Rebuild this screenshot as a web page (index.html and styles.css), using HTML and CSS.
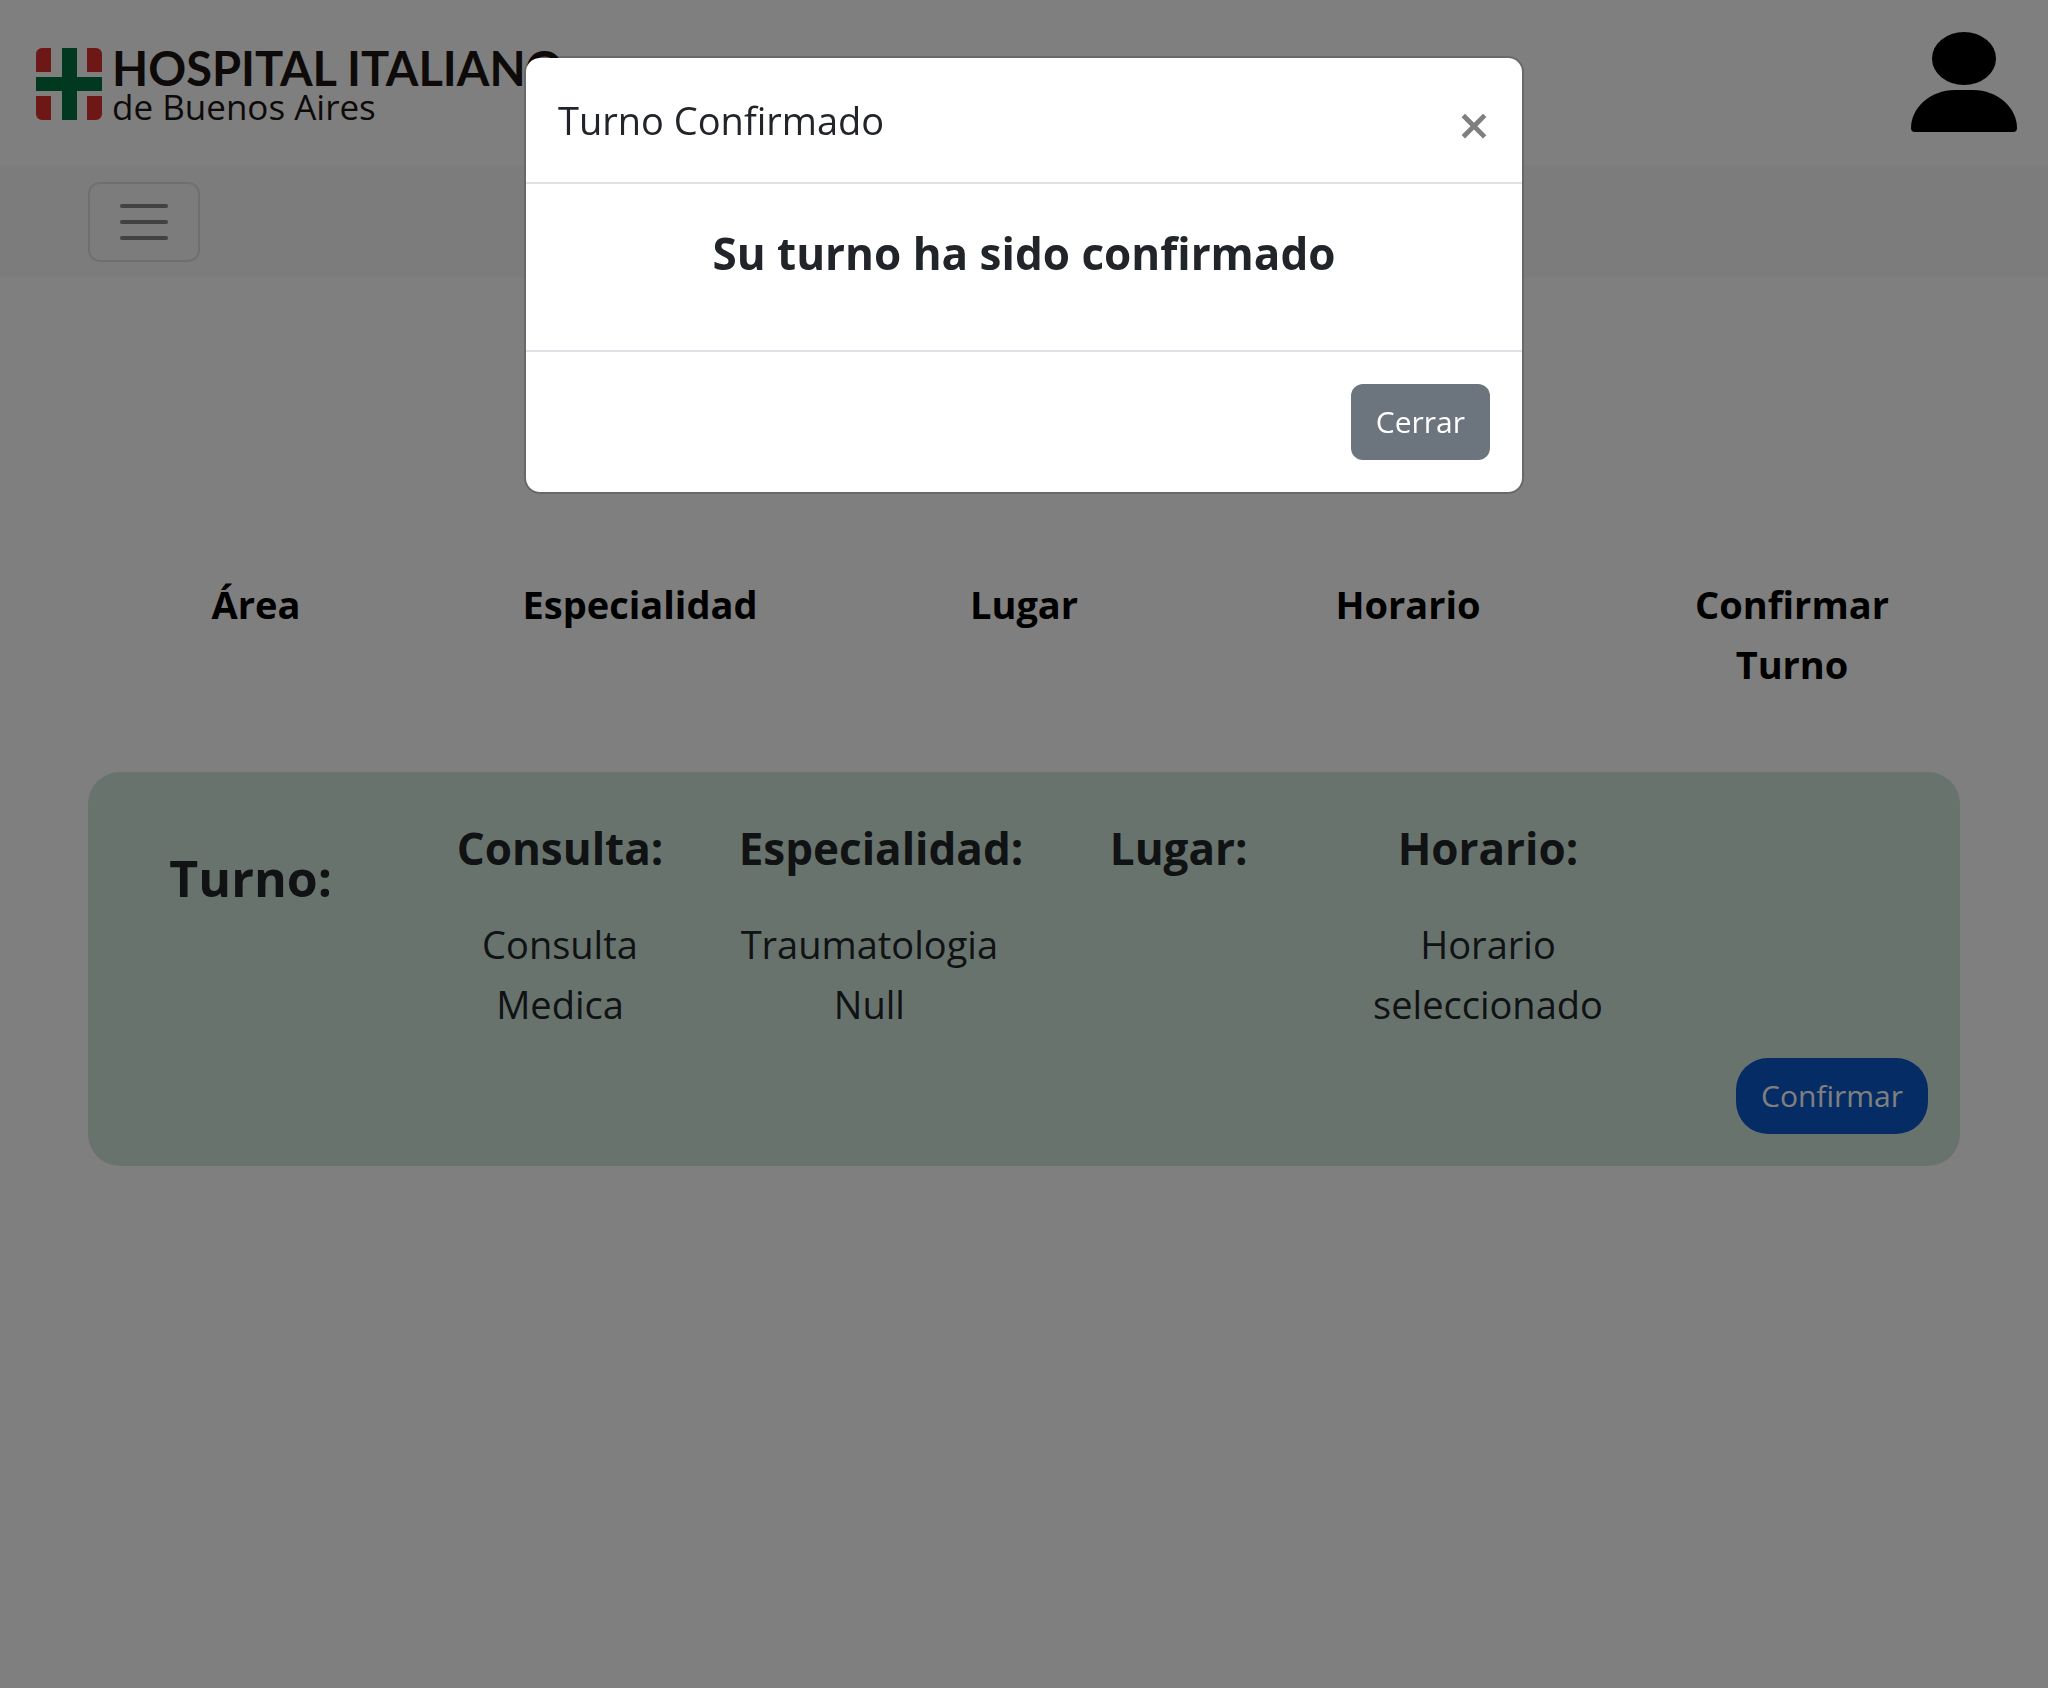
FILE: index.html
```html
<!DOCTYPE html>
<html lang="es">
<head>
<meta charset="utf-8">
<meta name="viewport" content="width=device-width, initial-scale=1">
<title>Turno Confirmado</title>
<link rel="stylesheet" href="styles.css">
</head>
<body>
<header class="site-header">
  <a class="brand" href="#">
    <svg class="brand-mark" viewBox="0 0 66 72" aria-hidden="true">
      <path fill="#db2f2f" d="M6 0h9v24H0V6a6 6 0 0 1 6-6zM51 0h9a6 6 0 0 1 6 6v18H51zM0 48h15v24H6a6 6 0 0 1-6-6zM51 48h15v18a6 6 0 0 1-6 6h-9z"/>
      <path fill="#007040" d="M26 0h15v29h25v14H41v29H26V43H0V29h26z"/>
    </svg>
    <span class="brand-text">
      <span class="brand-name">HOSPITAL ITALIANO</span>
      <span class="brand-place">de Buenos Aires</span>
    </span>
  </a>
  <a class="profile" href="#" aria-label="Perfil">
    <svg class="profile-icon" viewBox="0 0 106 100" aria-hidden="true">
      <ellipse cx="53" cy="26.500" rx="32" ry="26.500"/>
      <path d="M44 58h18c25 0 44 18 44 38q0 4-4 4H4q-4 0-4-4c0-20 19-38 44-38z"/>
    </svg>
  </a>
</header>
<nav class="navbar">
  <button class="toggler" type="button" aria-label="Menú">
    <svg class="toggler-icon" viewBox="0 0 30 30" aria-hidden="true"><path d="M4 7h22M4 15h22M4 23h22"/></svg>
  </button>
</nav>
<main class="content">
  <div class="columns">
    <div class="column">Área</div>
    <div class="column">Especialidad</div>
    <div class="column">Lugar</div>
    <div class="column">Horario</div>
    <div class="column">Confirmar Turno</div>
  </div>
  <section class="card">
    <div class="card-row">
      <h2 class="card-title">Turno:</h2>
      <div class="field"><h3 class="field-name">Consulta:</h3><p class="field-value">Consulta Medica</p></div>
      <div class="field"><h3 class="field-name">Especialidad:</h3><p class="field-value">Traumatologia Null</p></div>
      <div class="field"><h3 class="field-name">Lugar:</h3></div>
      <div class="field"><h3 class="field-name">Horario:</h3><p class="field-value">Horario seleccionado</p></div>
    </div>
    <div class="card-actions"><button class="btn btn-primary" type="button">Confirmar</button></div>
  </section>
</main>
<div class="backdrop">
  <div class="modal" role="dialog" aria-modal="true" aria-labelledby="modal-title">
    <div class="modal-header">
      <h1 class="modal-title" id="modal-title">Turno Confirmado</h1>
      <button class="close" type="button" aria-label="Cerrar ventana">×</button>
    </div>
    <div class="modal-body"><p class="modal-message">Su turno ha sido confirmado</p></div>
    <div class="modal-footer"><button class="btn btn-secondary" type="button">Cerrar</button></div>
  </div>
</div>
</body>
</html>
```
FILE: styles.css
```css
* { box-sizing: border-box; }

body {
  margin: 0;
  background: #fff;
  color: #212529;
  font: 400 38px/60px "Open Sans", "Noto Sans", sans-serif;
  font-variant-ligatures: none;
}

h1, h2, h3, p { margin: 0; }

.site-header {
  display: flex;
  justify-content: space-between;
  align-items: flex-start;
  min-height: 166px;
  padding: 32px 31px 32px 36px;
}

.brand {
  display: flex;
  gap: 10px;
  padding-top: 16px;
  color: #1a1512;
  text-decoration: none;
}

.brand-mark { width: 66px; height: 72px; }

.brand-text { display: flex; flex-direction: column; }

.brand-name { font: 700 47px/40px Lato, sans-serif; }

.brand-place { font: 400 35px/38px "Open Sans", sans-serif; }

.profile-icon { display: block; width: 106px; height: 100px; }

.navbar {
  display: flex;
  padding: 16px 88px;
  background: #f8f9fa;
}

.toggler {
  padding: 8px 24px;
  border: 2px solid #dedfe0;
  border-radius: 12px;
  background: none;
}

.toggler-icon {
  display: block;
  width: 60px;
  height: 60px;
  fill: none;
  stroke: #212529;
  stroke-opacity: .55;
  stroke-width: 2;
  stroke-linecap: round;
}

.content { padding: 296px 88px 64px; }

.columns {
  display: grid;
  grid-template-columns: repeat(5, 1fr);
  margin: 0 -24px 78px;
  color: #000;
  font-weight: 700;
  text-align: center;
}

.column { padding: 0 64px; }

.card {
  border-radius: 32px;
  background: #d1e7dd;
}

.card-row {
  display: grid;
  grid-template-columns: repeat(6, minmax(0, 1fr));
  padding: 40px 8px 0;
  text-align: center;
}

.field { padding: 0 24px; }

.card-title { padding-top: 32px; font-size: 50px; line-height: 68px; }

.field-name { margin-bottom: 30px; font-size: 44px; line-height: 72px; }

.card-actions {
  display: flex;
  justify-content: flex-end;
  padding: 24px 32px 32px;
}

.btn {
  padding: 12px 23px;
  border: 2px solid transparent;
  color: #fff;
  font: 400 30px/48px "Open Sans", "Noto Sans", sans-serif;
  font-variant-ligatures: none;
}

.btn-primary { border-radius: 32px; background: #0a58ca; }

.btn-secondary { border-radius: 12px; background: #6c757d; }

.backdrop {
  position: fixed;
  inset: 0;
  padding: 56px 24px;
  overflow: auto;
  background: rgba(0, 0, 0, .5);
}

.modal {
  max-width: 1000px;
  margin: 0 auto;
  border: 2px solid rgba(0, 0, 0, .175);
  border-radius: 16px;
  background: #fff;
  background-clip: padding-box;
}

.modal-header {
  display: flex;
  justify-content: space-between;
  align-items: center;
  padding: 32px;
  border-bottom: 2px solid #dee2e6;
}

.modal-title { font-size: 38px; font-weight: 500; line-height: 60px; }

.close {
  padding: 8px 0 0;
  border: 0;
  background: none;
  color: #7f7f7f;
  font: 600 56px/52px "Open Sans", sans-serif;
}

.modal-body { padding: 34px 32px 62px; text-align: center; }

.modal-message { font-size: 44px; font-weight: 700; line-height: 70px; }

.modal-footer {
  display: flex;
  justify-content: flex-end;
  padding: 32px;
  border-top: 2px solid #dee2e6;
}
```
